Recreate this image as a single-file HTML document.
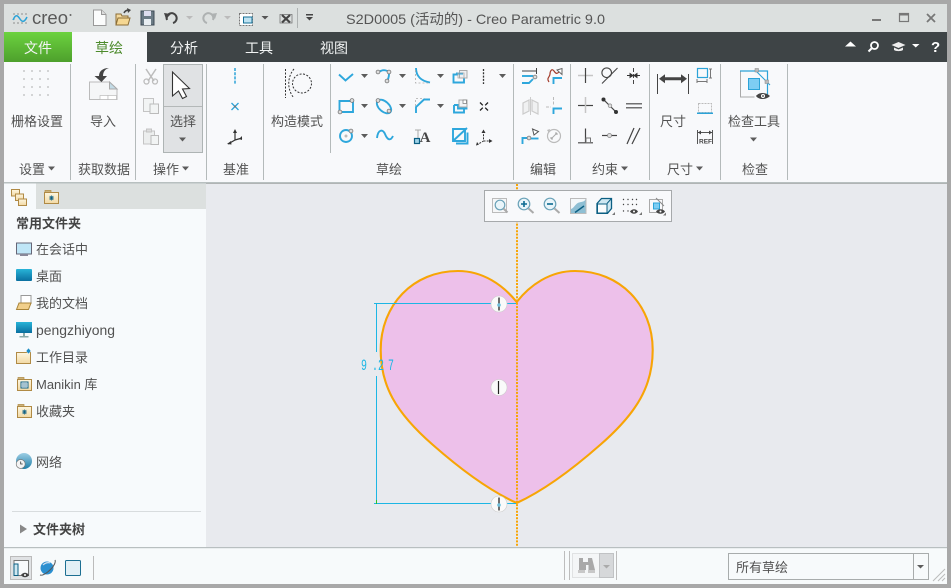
<!DOCTYPE html>
<html><head><meta charset="utf-8"><title>Creo</title>
<style>
html,body{margin:0;padding:0;background:#a8a8a8;width:951px;height:588px;overflow:hidden}
svg{display:block}
text{font-family:"Liberation Sans","Noto Sans CJK SC",sans-serif;font-size:13px;fill:#525252}
.t{fill:#f2f4f4}
.b{font-weight:700;fill:#444}
.bl{fill:none;stroke:#2ea7dc;stroke-width:1.9}
.ar{fill:#5c5c5c}
.hd{fill:#ddd;stroke:#777;stroke-width:.8}
.sep{stroke:#b4baba;stroke-width:1}
</style></head><body>
<svg width="951" height="588" viewBox="0 0 951 588" xmlns="http://www.w3.org/2000/svg">
<defs>
<linearGradient id="gr" x1="0" y1="0" x2="0" y2="1"><stop offset="0" stop-color="#6cd23f"/><stop offset="1" stop-color="#4ea02c"/></linearGradient>
<linearGradient id="scr" x1="0" y1="0" x2="0" y2="1"><stop offset="0" stop-color="#28b4d8"/><stop offset="1" stop-color="#0a6fa0"/></linearGradient>
<linearGradient id="fold" x1="0" y1="0" x2="0" y2="1"><stop offset="0" stop-color="#fdf6e0"/><stop offset="1" stop-color="#f2d9a4"/></linearGradient>
<linearGradient id="glob" x1="0" y1="0" x2="0" y2="1"><stop offset="0" stop-color="#9ccde4"/><stop offset="1" stop-color="#1f7fa8"/></linearGradient>
</defs>
<rect width="951" height="588" fill="#a8a8a8"/>
<!-- title bar -->
<rect x="4" y="4" width="943" height="28" fill="#dce0df"/>
<!-- logo -->
<g fill="#555"><circle cx="14" cy="14" r=".6"/><circle cx="18" cy="14" r=".6"/><circle cx="22" cy="14" r=".6"/><circle cx="26" cy="14" r=".6"/><circle cx="14" cy="19" r=".6"/><circle cx="26" cy="19" r=".6"/><circle cx="14" cy="23" r=".6"/><circle cx="18" cy="23" r=".6"/><circle cx="22" cy="23" r=".6"/><circle cx="26" cy="23" r=".6"/></g>
<path d="M13 20c3-7 5-4 7-1s4 4 7-2" fill="none" stroke="#2ba3d8" stroke-width="1.500"/>
<text x="32" y="24" style="font-size:18px;fill:#5a5a5a" textLength="36" lengthAdjust="spacingAndGlyphs">creo</text>
<circle cx="70.500" cy="15" r="1" fill="#666"/>
<!-- QAT -->
<path d="M93.500 10h8l4.500 4.500V25.500H93.500z" fill="#fbfcfc" stroke="#999"/><path d="M101.500 10v4.500h4.500" fill="#ddd" stroke="#999"/>
<path d="M116 25V14h5l1 2h6v2" fill="#f3d99e" stroke="#8b6d36"/><path d="M116 25l2-7h12l-2 7z" fill="#f5d792" stroke="#8b6d36"/><path d="M124 13c1-2 3-3 5-3" stroke="#444" stroke-width="1.500" fill="none"/><path d="M127 8l4 2-3 3z" fill="#444"/>
<rect x="141" y="11" width="13" height="14" fill="#6b7b85" stroke="#3e4a55"/><rect x="144" y="11" width="7" height="5" fill="#dde"/><rect x="144" y="19" width="7" height="6" fill="#e8eef2"/>
<path d="M167 20a5 5 0 1 1 6 3" fill="none" stroke="#444" stroke-width="2"/><path d="M164 13l7 1-5 5z" fill="#444"/>
<path d="M186 16h7l-3.500 3.500z" fill="#bbb"/>
<path d="M213 20a5 5 0 1 0-6 3" fill="none" stroke="#aeb2b2" stroke-width="2"/><path d="M217 13l-7 1 5 5z" fill="#aeb2b2"/>
<path d="M224 16h7l-3.500 3.500z" fill="#bbb"/>
<rect x="239.500" y="13.500" width="13" height="12" fill="#fff" stroke="#777" stroke-dasharray="2 1"/><rect x="243.500" y="17" width="8.500" height="6" fill="#bfe3f2" stroke="#146f96"/>
<path d="M261.500 16h7l-3.500 3.500z" fill="#555"/>
<rect x="280" y="14.500" width="12" height="8.500" fill="none" stroke="#777" stroke-width=".8"/><path d="M282 15l8 7.500m0-7.500l-8 7.500" stroke="#444" stroke-width="2.200"/>
<line x1="297.500" y1="8" x2="297.500" y2="28" stroke="#aeb2b2"/>
<rect x="306" y="14" width="7" height="1.500" fill="#444"/><path d="M306 17h7l-3.500 3.500z" fill="#444"/>
<text x="346" y="24" style="font-size:14px;fill:#555" textLength="259" lengthAdjust="spacingAndGlyphs">S2D0005 (活动的) - Creo Parametric 9.0</text>
<rect x="872" y="19" width="9" height="2" fill="#777"/>
<rect x="899.500" y="13.500" width="9" height="8" fill="none" stroke="#777" stroke-width="1.200"/><rect x="899" y="13" width="10" height="2.500" fill="#777"/>
<path d="M927 14l8 8m0-8l-8 8" stroke="#777" stroke-width="1.800"/>
<!-- tab bar -->
<rect x="4" y="32" width="943" height="30" fill="#3e4446"/>
<rect x="4" y="32" width="68" height="30" fill="url(#gr)"/>
<rect x="72" y="32" width="75" height="30" fill="#f8f9fb"/>
<text class="t" x="24" y="53" style="font-size:14px">文件</text>
<text x="95" y="53" style="font-size:14px;fill:#4d8b2c">草绘</text>
<text class="t" x="170" y="53" style="font-size:14px">分析</text>
<text class="t" x="245" y="53" style="font-size:14px">工具</text>
<text class="t" x="320" y="53" style="font-size:14px">视图</text>
<path d="M845 46.500l5.500-5 5.500 5z" fill="#fff"/>
<circle cx="874.500" cy="45.500" r="3.500" fill="none" stroke="#fff" stroke-width="1.800"/><path d="M871.500 48.500l-3 3" stroke="#fff" stroke-width="2"/>
<path d="M891.500 45l7-3 7 3-7 3z" fill="#eee"/><path d="M894 47.500v2.500c2 1.500 7 1.500 9 0v-2.500l-4.500 2z" fill="#eee"/>
<path d="M912 44h7.500l-3.750 3.500z" fill="#fff"/>
<text x="931" y="52" style="font-size:15px;font-weight:700;fill:#fff">?</text>
<!-- ribbon -->
<rect x="4" y="62" width="943" height="120" fill="#f8f9fb"/>
<rect x="4" y="182" width="943" height="1.500" fill="#b8c0c0"/>
<g class="sep"><line x1="70.500" y1="64" x2="70.500" y2="180"/><line x1="135.500" y1="64" x2="135.500" y2="180"/><line x1="206.500" y1="64" x2="206.500" y2="180"/><line x1="263.500" y1="64" x2="263.500" y2="180"/><line x1="330.500" y1="64" x2="330.500" y2="153"/><line x1="513.500" y1="64" x2="513.500" y2="180"/><line x1="570.500" y1="64" x2="570.500" y2="180"/><line x1="649.500" y1="64" x2="649.500" y2="180"/><line x1="720.500" y1="64" x2="720.500" y2="180"/><line x1="787.500" y1="64" x2="787.500" y2="180"/></g>
<!-- grid icon -->
<g fill="#777"><circle cx="24" cy="71" r=".6"/><circle cx="32" cy="71" r=".6"/><circle cx="40" cy="71" r=".6"/><circle cx="48" cy="71" r=".6"/><circle cx="24" cy="79" r=".6"/><circle cx="32" cy="79" r=".6"/><circle cx="40" cy="79" r=".6"/><circle cx="48" cy="79" r=".6"/><circle cx="24" cy="87" r=".6"/><circle cx="32" cy="87" r=".6"/><circle cx="40" cy="87" r=".6"/><circle cx="48" cy="87" r=".6"/><circle cx="24" cy="95" r=".6"/><circle cx="32" cy="95" r=".6"/><circle cx="40" cy="95" r=".6"/><circle cx="48" cy="95" r=".6"/></g>
<!-- import icon -->
<path d="M89.500 82h20l7.500 7v10.500h-27.500z" fill="#f5f6f7" stroke="#bbb"/><path d="M109.500 82v7h7.500z" fill="#c3dbe6" stroke="#aaa"/><rect x="100" y="95.500" width="8" height="4" fill="#fff" stroke="#bbb" stroke-width=".7"/><rect x="108" y="95.500" width="8.500" height="4" fill="#fff" stroke="#bbb" stroke-width=".7"/>
<path d="M109 68c-4 1-6 4-6 8h4l-5.500 6-7-6h4.500c0-5 4-8 10-8z" fill="#444"/>
<!-- cut copy paste -->
<path d="M146 69l8 12M156 69l-8 12" stroke="#bcbcbc" stroke-width="1.500"/><circle cx="146.500" cy="81.500" r="2.500" fill="none" stroke="#bcbcbc" stroke-width="1.300"/><circle cx="155" cy="81.500" r="2.500" fill="none" stroke="#bcbcbc" stroke-width="1.300"/>
<rect x="143.500" y="98.500" width="10" height="13" fill="#f2f4f4" stroke="#c4c4c4"/><rect x="150" y="104" width="8.500" height="9.500" fill="#f2f4f4" stroke="#bbb"/>
<rect x="143.500" y="131" width="11" height="13" fill="#eceeee" stroke="#c4c4c4"/><rect x="146.500" y="129" width="5" height="3" fill="#ddd" stroke="#c4c4c4"/><rect x="151" y="135.500" width="7.500" height="9" fill="#f2f4f4" stroke="#bbb"/>
<!-- select -->
<rect x="163.500" y="64.500" width="39" height="88" fill="#e0e2e4" stroke="#aeb4b4"/><line x1="164" y1="106.500" x2="202" y2="106.500" stroke="#b4b8b8"/>
<path d="M172.500 72v24l6-5 4 7.500 4-2-4-7.500 7-.5z" fill="#fff" stroke="#333" stroke-width="1.100"/>
<text x="170" y="126">选择</text><path d="M179 137.500h7l-3.500 4z" class="ar"/>
<!-- datum -->
<path d="M235 68v16" stroke="#2ba3d8" stroke-width="1.500" stroke-dasharray="3 1.200"/>
<path d="M231.500 103l7 7m0-7l-7 7" stroke="#2ba3d8" stroke-width="1.300"/><circle cx="235" cy="106.500" r="1.100" fill="#777"/>
<path d="M235 131v9l-7 4M235 140l7-2" fill="none" stroke="#333" stroke-width="1.200"/><path d="M233 133l2-4 2 4zM227 144l4-3 .5 3.500zM242 136l0 4 -3-1z" fill="#333"/>
<!-- construction -->
<path d="M285.500 69v29" stroke="#333" stroke-width="1" stroke-dasharray="2 1.500"/>
<path d="M294 69c-7 8-7 21 0 29" fill="none" stroke="#333" stroke-width="1" stroke-dasharray="2 1.500"/>
<circle cx="302" cy="83.500" r="9.500" fill="none" stroke="#333" stroke-width="1" stroke-dasharray="2 1.500"/>
<!-- sketch row 1 -->
<path class="bl" d="M339 74.500l6.500 6 7.500-6.500"/>
<path class="ar" d="M361 74h7l-3.500 4z"/>
<path class="bl" d="M379 72c4-3 10-2 10 2 0 3-1 6-3 8"/><circle class="hd" cx="378" cy="72" r="1.900"/><circle class="hd" cx="389" cy="72" r="1.900"/><circle class="hd" cx="387" cy="81" r="1.900"/>
<path class="ar" d="M399 74h7l-3.500 4z"/>
<path class="bl" d="M416 68c0 8 5 13 14 14.500"/><path d="M415.500 70v13h13" fill="none" stroke="#aaa" stroke-dasharray="2 2" stroke-width=".8"/>
<path class="ar" d="M437 74h7l-3.500 4z"/>
<rect x="459.500" y="70.500" width="7.500" height="7.500" fill="#eef0f2" stroke="#aaa"/>
<path class="bl" d="M458 74.500h-4.500v8h10.500v-4M457 74.500v-1h6" /><path d="M458 73h6v5h-6z" fill="none" stroke="#aaa" stroke-width=".8"/>
<path d="M483.500 69v15" stroke="#333" stroke-width="1.300" stroke-dasharray="2 1.300"/>
<path class="ar" d="M499 74h7l-3.500 4z"/>
<!-- row 2 -->
<path class="bl" d="M339.500 101h13.500v11h-13.500z"/><circle class="hd" cx="352" cy="100.500" r="1.900"/><circle class="hd" cx="340" cy="112" r="1.900"/>
<path class="ar" d="M361 104h7l-3.500 4z"/>
<ellipse class="bl" cx="384" cy="106.500" rx="8.500" ry="5" transform="rotate(42 384 106.500)"/><circle class="hd" cx="378" cy="100.500" r="1.900"/><circle class="hd" cx="389" cy="111" r="1.900"/>
<path class="ar" d="M399 104h7l-3.500 4z"/>
<path class="bl" d="M416 113v-6l8-7.500h6"/><path d="M415.500 106v-7.500h9" fill="none" stroke="#aaa" stroke-dasharray="2 2" stroke-width=".8"/>
<path class="ar" d="M437 104h7l-3.500 4z"/>
<path class="bl" d="M454 105v7.500h10v-3M454 105h4v3.500h8.500v-3"/><rect x="459" y="100" width="8" height="7" fill="#f2f4f6" stroke="#aaa"/><rect x="463" y="100" width="3.500" height="3.500" fill="#fff" stroke="#777" stroke-width=".7"/>
<path d="M480 102.500l2.800 2.800m2.400 2.400l2.800 2.800m0-8l-2.800 2.800m-2.400 2.400l-2.800 2.800" stroke="#222" stroke-width="1.300"/>
<!-- row 3 -->
<circle class="bl" cx="346" cy="136" r="6" stroke-width="2"/><circle cx="346" cy="136" r="1.500" fill="#bbb"/><circle class="hd" cx="351" cy="131" r="1.900"/>
<path class="ar" d="M361 134h7l-3.500 4z"/>
<path class="bl" d="M377 138c1-9 6-9 8-4s5 8 8 2" stroke-width="2"/>
<text x="425" y="142" style="font:700 15px 'Liberation Serif',serif;fill:#444" text-anchor="middle">A</text><path d="M415 130h6M418 130v8" stroke="#aaa"/><rect x="414.500" y="138.500" width="5" height="5" fill="#9fd3e8" stroke="#0c5f83" stroke-width="1.200"/>
<path class="bl" d="M453 129h12v12h-12z"/><path class="bl" d="M453 141l14-13" /><path d="M456 143.500h11.500v-11" class="bl"/>
<path d="M483.500 131v10l-7 4M483.500 141h8" fill="none" stroke="#333" stroke-dasharray="2 1.200"/><path d="M481.500 133l2-3.500 2 3.500zM476 145.500l1-3.500 2 2.500zM489 139l3.500 2-3.500 2z" fill="#333"/>
<!-- edit -->
<path d="M522 71h15M536.500 68v6" stroke="#444" stroke-width="1"/><path class="bl" d="M522 76h11"/><path class="bl" d="M522 83h7l4-4"/><circle class="hd" cx="535" cy="77" r="1.900"/>
<path d="M549 82c-3-4 1-5 1-8s2-6 4-3 3 3 5 1" fill="none" stroke="#a23b2a" stroke-width="1.200"/><path d="M557 70l5-1.500v6z" fill="#fff" stroke="#666"/><path class="bl" d="M553.500 84v-6h8.500"/>
<path d="M529 100l-6 3v11l6-3zM532 100l6 3v11l-6-3z" fill="#f0f1f2" stroke="#ccc" stroke-width="1.200"/><line x1="530.500" y1="97" x2="530.500" y2="115" stroke="#ccc"/>
<path d="M546 107h5M553.500 97v8" stroke="#bbb" stroke-dasharray="3 1.500"/><path class="bl" d="M553.500 114v-5.500h8.500"/>
<path class="bl" d="M522.500 144v-6h5"/><path class="bl" d="M531 138.500h7.500"/><circle class="hd" cx="529" cy="138" r="1.900"/><path d="M532.500 129l6 2.500-4.500 3.500z" fill="#fff" stroke="#555"/>
<circle cx="554" cy="136" r="6.500" fill="none" stroke="#bbb" stroke-width="1.200"/><path d="M551 139l6-6M557 133l-2 0M557 133v2M551 139h2M551 139v-2" stroke="#aaa"/><path d="M547 130l2 3 1-4z" fill="#bbb"/>
<!-- constraints -->
<path d="M578 75.500h15" stroke="#c6c6c6" stroke-width="1.500"/><path d="M585.500 68v15" stroke="#444" stroke-width="1.200"/>
<circle cx="606.700" cy="72.700" r="4.800" fill="none" stroke="#444" stroke-width="1.100"/><path d="M602 83.500l15.500-15.500" stroke="#444" stroke-width="1.100"/>
<path d="M633.500 68v4m0 2v4m0 2v4M627 75.500h3v-2l3 2-3 2v-2zM640 75.500h-3v-2l-3 2 3 2v-2z" stroke="#333" fill="#333" stroke-width=".9"/>
<path d="M578 105.500h15" stroke="#444" stroke-width="1.200"/><path d="M585.500 97v16" stroke="#c6c6c6" stroke-width="1.500"/>
<path d="M603.500 99.500l12.500 12.500" stroke="#444" stroke-width="1.200"/><circle cx="603.500" cy="99.500" r="2" fill="#333"/><circle cx="616" cy="112" r="2" fill="#333"/><circle cx="610" cy="105.700" r="1.800" fill="#ddd" stroke="#888" stroke-width=".7"/>
<path d="M626 103.800h16M626 107.800h16" stroke="#444" stroke-width="1.200"/>
<path d="M578 142.800h15M585.500 128.500v14" stroke="#444" stroke-width="1.200"/><rect x="586" y="138" width="4.500" height="4.800" fill="none" stroke="#777"/>
<path d="M602 135.500h15" stroke="#444" stroke-width="1.200"/><circle cx="609.500" cy="135.500" r="2" fill="#ddd" stroke="#888" stroke-width=".8"/>
<path d="M627 144l7-16M632 144l8-16" stroke="#444" stroke-width="1.200"/>
<!-- dims -->
<path d="M657.500 74v20M688.500 74v20" stroke="#444" stroke-width="1"/><path d="M659 78.700l6-4.500v3h16v-3l6 4.500-6 4.500v-3h-16v3z" fill="#444"/>
<rect x="697.500" y="68.500" width="10" height="9" fill="none" stroke="#2ba3d8" stroke-width="1.200"/><path d="M710.500 69v9M709 69h3M709 78h3M697 81.500h10M697 79v4M707 79v4" stroke="#777"/>
<rect x="698.500" y="103.500" width="13" height="9" fill="none" stroke="#bbb" stroke-dasharray="2 1"/><rect x="697" y="112.500" width="16" height="1.500" fill="#2ba3d8"/>
<path d="M697.500 130v14M712.500 130v14M698 132.500h14" stroke="#555"/><path d="M698 132.500l3-2v4zM712 132.500l-3-2v4z" fill="#444"/><text x="699" y="143.500" style="font:700 6.500px 'Liberation Sans',sans-serif;fill:#444">REF</text>
<!-- inspect -->
<path d="M740.500 71v26h14" fill="none" stroke="#a9a9a9"/><path d="M740 71h27.500v25" fill="none" stroke="#2ba3d8" stroke-width="1.200"/><path d="M755 70l15 15" stroke="#2ba3d8" stroke-width="1"/>
<rect x="748.500" y="78.500" width="11" height="11" fill="#7dcdf3" stroke="#2ba3d8"/>
<rect x="755" y="68.500" width="3.500" height="3.500" fill="#bbb" stroke="#888" stroke-width=".5"/><rect x="765" y="80" width="3.500" height="3.500" fill="#bbb" stroke="#888" stroke-width=".5"/>
<path d="M756 96c3-4 10-4 14 0-4 4-11 4-14 0z" fill="#444"/><circle cx="763" cy="96" r="2" fill="#fff"/><circle cx="763" cy="96" r=".9" fill="#333"/>
<!-- ribbon labels -->
<text x="11" y="126">栅格设置</text><text x="90" y="126">导入</text><text x="271" y="126">构造模式</text><text x="660" y="126">尺寸</text><text x="728" y="126">检查工具</text>
<path class="ar" d="M750 137.500h7l-3.500 4z"/>
<text x="19" y="174">设置</text><path class="ar" d="M48 166.500h7l-3.500 4z"/>
<text x="78" y="174">获取数据</text>
<text x="153" y="174">操作</text><path class="ar" d="M182 166.500h7l-3.500 4z"/>
<text x="223" y="174">基准</text><text x="376" y="174">草绘</text><text x="530" y="174">编辑</text>
<text x="592" y="174">约束</text><path class="ar" d="M621 166.500h7l-3.500 4z"/>
<text x="667" y="174">尺寸</text><path class="ar" d="M696 166.500h7l-3.500 4z"/>
<text x="742" y="174">检查</text>
<!-- graphics area -->
<rect x="206" y="184" width="741" height="363" fill="#e8eaee"/>
<path d="M516.700 302C530 285 550 271 575 271C620 271 652.700 305 652.700 350C652.700 385 638 412 600 445C575 467 545 490 516.700 503C488 490 458 467 433 445C395 412 380.700 385 380.700 350C380.700 305 413 271 458 271C483 271 503 285 516.700 302Z" fill="#edc0ea" stroke="#f7a505" stroke-width="2.100"/>
<line x1="517" y1="184" x2="517" y2="547" stroke="#f7a505" stroke-width="2" stroke-dasharray="2 1.300"/>
<g stroke="#1cb6e4" stroke-width="1"><line x1="374" y1="303.500" x2="516" y2="303.500"/><line x1="374" y1="503.500" x2="516" y2="503.500"/><line x1="376.500" y1="303" x2="376.500" y2="352"/><line x1="376.500" y1="376" x2="376.500" y2="503"/></g>
<path d="M376.500 500v4" stroke="#2bc02b" stroke-width="1"/>
<g style="fill:#1cb6e4">
<text transform="translate(361,370) scale(.62,1)" style="font:16px 'Liberation Mono',monospace;fill:#1cb6e4">9</text>
<text transform="translate(372,370) scale(.62,1)" style="font:16px 'Liberation Mono',monospace;fill:#1cb6e4">.</text>
<text transform="translate(378,370) scale(.62,1)" style="font:16px 'Liberation Mono',monospace;fill:#1cb6e4">2</text>
<text transform="translate(388,370) scale(.62,1)" style="font:16px 'Liberation Mono',monospace;fill:#1cb6e4">7</text>
</g>
<g>
<circle cx="499" cy="304" r="8" fill="#fafafa" stroke="#ccc" stroke-width=".6"/><path d="M499 297.500v13" stroke="#333" stroke-width="1.400"/><circle cx="499" cy="305" r="1.800" fill="#6fc0dc"/>
<circle cx="499" cy="387.500" r="8" fill="#fafafa" stroke="#ccc" stroke-width=".6"/><path d="M498.500 381v13" stroke="#222" stroke-width="1.200"/>
<circle cx="499" cy="504" r="8" fill="#fafafa" stroke="#ccc" stroke-width=".6"/><path d="M499 497.500v13" stroke="#333" stroke-width="1.400"/><circle cx="499" cy="505" r="1.800" fill="#6fc0dc"/>
</g>
<!-- graphics toolbar -->
<rect x="484.500" y="190.500" width="187" height="31" fill="#f8f9fb" stroke="#a6a9ab"/>
<g>
<rect x="492.500" y="198.500" width="14" height="14" fill="#f6f7f8" stroke="#bbb"/><circle cx="500" cy="205" r="4.800" fill="#e9f5fa" stroke="#6aa2b8" stroke-width="1.200"/><path d="M503.500 208.500l4 4" stroke="#aaa" stroke-width="2"/>
<circle cx="524" cy="204" r="5.800" fill="#e9f5fa" stroke="#6aa2b8" stroke-width="1.200"/><path d="M521 204h6M524 201v6" stroke="#0c6a92" stroke-width="1.600"/><path d="M528.500 208.500l5 4.500" stroke="#aaa" stroke-width="2"/>
<circle cx="550" cy="204" r="5.800" fill="#e9f5fa" stroke="#6aa2b8" stroke-width="1.200"/><path d="M547 204h6" stroke="#0c6a92" stroke-width="1.600"/><path d="M554.500 208.500l5 4.500" stroke="#aaa" stroke-width="2"/>
<rect x="570.500" y="198.500" width="15.500" height="15" fill="#8ebfd4" stroke="#bbb"/><path d="M571 209v-10h14.500c-1 4-6 2-9 5s-3 4-5.500 5z" fill="#f4f8fa"/><path d="M575 212.500l9-6.500" stroke="#0c5f83" stroke-width="1.400"/>
<path d="M597 203.500l4.500-5h10v10l-4 4.800h-10.500z" fill="#cfe8f2" stroke="#0c5f83" stroke-width="1.300"/><rect x="597.500" y="204" width="9.500" height="9" fill="#fafcfd" stroke="#0c5f83" stroke-width="1"/><path d="M607 203.500l4.500-5" stroke="#0c5f83"/>
<path d="M612 215l3-3v3z" fill="#777"/>
<g fill="#444"><circle cx="623.500" cy="199.500" r=".7"/><circle cx="628" cy="199.500" r=".7"/><circle cx="632.500" cy="199.500" r=".7"/><circle cx="636.500" cy="199.500" r=".7"/><circle cx="623.500" cy="204.500" r=".7"/><circle cx="628" cy="204.500" r=".7"/><circle cx="632.500" cy="204.500" r=".7"/><circle cx="636.500" cy="204.500" r=".7"/><circle cx="623.500" cy="211" r=".7"/><circle cx="628" cy="211" r=".7"/></g>
<path d="M630 211.500c2-3 6-3 8 0-2 3-6 3-8 0z" fill="#444"/><circle cx="634" cy="211.500" r="1" fill="#fff"/><path d="M639 215l3-3v3z" fill="#777"/>
<rect x="649.500" y="199.500" width="13" height="13" fill="none" stroke="#aaa"/><rect x="653.500" y="203" width="6" height="6" fill="#7dcdf3" stroke="#2ba3d8"/><path d="M656 198l8 8" stroke="#888"/>
<path d="M656 211.500c2-3 7-3 9 0-2 3-7 3-9 0z" fill="#444"/><circle cx="660.500" cy="211.500" r="1" fill="#fff"/><path d="M663 215.500l3-3v3z" fill="#777"/>
</g>
<!-- left panel -->
<rect x="4" y="183.500" width="202" height="364" fill="#f7fafc"/>
<rect x="36" y="183.500" width="170" height="25.500" fill="#dce0df"/>
<rect x="4" y="183.500" width="32" height="25.500" fill="#f7fafc"/>
<g stroke="#b08a45" fill="url(#fold)" stroke-width="1"><rect x="11.500" y="189.500" width="8" height="6.500"/><rect x="15.500" y="194" width="8" height="6.500"/><rect x="18.500" y="199" width="8" height="6.500"/></g>
<rect x="44.500" y="192.500" width="14" height="11" fill="url(#fold)" stroke="#b08a45"/><path d="M45 192v-1.500h6v1.500" fill="#cbb27a" stroke="#b08a45" stroke-width=".7"/><path d="M49 198h5M51.500 195.500v5M49.700 196l3.600 4M53.300 196l-3.600 4" stroke="#0c5f83" stroke-width=".8"/>
<text class="b" x="16" y="228" style="font-size:13px">常用文件夹</text>
<text x="36" y="254">在会话中</text><text x="36" y="281">桌面</text><text x="36" y="308">我的文档</text>
<text x="36" y="335" textLength="79" lengthAdjust="spacingAndGlyphs" style="font-size:13.500px">pengzhiyong</text>
<text x="36" y="362">工作目录</text><text x="36" y="389">Manikin 库</text><text x="36" y="416">收藏夹</text><text x="36" y="467">网络</text>
<!-- left icons -->
<rect x="16.500" y="243" width="15" height="11" fill="#bfe6f7" stroke="#667"/><rect x="20" y="254" width="8" height="2" fill="#889"/>
<rect x="16" y="269" width="16" height="12" rx="1" fill="url(#scr)"/>
<path d="M21 295.500h10v8H21z" fill="#fff" stroke="#999"/><path d="M16.500 309.500l2.500-6.500h12l-2.500 6.500z" fill="#f1cf8b" stroke="#a98438"/>
<rect x="16" y="322" width="16" height="11" fill="url(#scr)"/><rect x="23" y="333" width="2" height="3" fill="#8aa"/><rect x="19.500" y="336" width="9" height="1.500" fill="#8aa"/>
<rect x="16.500" y="352.500" width="14" height="11" fill="url(#fold)" stroke="#b08a45"/><path d="M26 351l2.500-3 2.500 3-2.500 3z" fill="#1d8bc2" stroke="#fff" stroke-width=".5"/>
<rect x="17.500" y="379.500" width="14" height="11" fill="url(#fold)" stroke="#b08a45"/><rect x="21" y="382" width="7" height="6" fill="#fff" stroke="#0c5f83"/><path d="M22 384h5M22 386h5" stroke="#0c5f83" stroke-width=".7"/><path d="M18 379v-1.500h6v1.500" fill="#cbb27a" stroke="#b08a45" stroke-width=".7"/>
<rect x="17.500" y="406.500" width="14" height="11" fill="url(#fold)" stroke="#b08a45"/><path d="M18 406v-1.500h6v1.500" fill="#cbb27a" stroke="#b08a45" stroke-width=".7"/><path d="M22 412h5M24.500 409.500v5M22.700 410l3.600 4M26.300 410l-3.600 4" stroke="#0c5f83" stroke-width=".8"/>
<circle cx="24" cy="461" r="8" fill="url(#glob)"/><circle cx="20.700" cy="464" r="4.500" fill="#f4f4f4" stroke="#777" stroke-width=".7"/><path d="M20.700 461.500v2.500h2" stroke="#333" fill="none" stroke-width=".8"/>
<line x1="12" y1="511.500" x2="201" y2="511.500" stroke="#d8dcde"/>
<path d="M20 524.500l7 4.500-7 4.500z" fill="#888"/>
<text class="b" x="33" y="534" style="font-size:13px">文件夹树</text>
<!-- status bar -->
<rect x="4" y="547" width="943" height="37" fill="#f7fafb"/>
<rect x="4" y="547" width="943" height="1.200" fill="#b8bfc0"/>
<rect x="10.500" y="556.500" width="21" height="23" fill="#e0e2e4" stroke="#bbb"/>
<rect x="14" y="560.500" width="14.500" height="15" fill="#f8f9fb" stroke="#777"/><rect x="14" y="564" width="4" height="11.500" fill="#cfe8f2" stroke="#0c5f83"/><path d="M21 575c2-3 6-3 8 0-2 3-6 3-8 0z" fill="#444"/><circle cx="25" cy="575" r="1" fill="#fff"/>
<circle cx="47" cy="568" r="6.500" fill="#2b8fd0"/><path d="M40 575c3 1 8-3 11-6s5-7 4-9" fill="none" stroke="#555"/><path d="M43 565c2-2 5-3 7-2" stroke="#cde" fill="none" stroke-width="1.200"/>
<rect x="65.500" y="560.500" width="15" height="15" rx="1" fill="#e2eff5" stroke="#1d6f92"/>
<line x1="93.500" y1="556" x2="93.500" y2="580" stroke="#bbb"/>
<path d="M564.500 551v29M569.500 551v29M616.500 551v29" stroke="#bdbdbd"/>
<rect x="572.500" y="553.500" width="27" height="24" fill="#f4f6f7" stroke="#e0e2e3"/>
<path d="M579 558h4v4h5v-4h4l3 12h-6.500v-5h-2.500v5h-7z" fill="#a9a9a9"/><rect x="578" y="570" width="7" height="3" fill="#c8c8c8"/><rect x="588" y="570" width="7" height="3" fill="#c8c8c8"/>
<rect x="599.500" y="553.500" width="14" height="24" fill="#d6d8da" stroke="#c0c2c4"/><path d="M603 565h7l-3.500 3.500z" fill="#aaa"/>
<rect x="728.500" y="553.500" width="200" height="26" fill="#f7fafb" stroke="#a8acac"/><line x1="913.500" y1="554" x2="913.500" y2="579" stroke="#a8acac"/>
<text x="736" y="572">所有草绘</text>
<path class="ar" d="M917 565h7l-3.500 3.500z"/>
<path d="M933 581l12-12M938 581l7-7M942 581l3-3" stroke="#bbb"/>
</svg>
</body></html>
